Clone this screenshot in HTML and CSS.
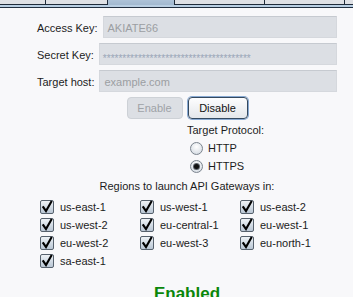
FILE: index.html
```html
<!DOCTYPE html>
<html>
<head>
<meta charset="utf-8">
<link rel="stylesheet" href="styles.css">
</head>
<body>
<div class="tabs">
  <div class="tab t1"></div>
  <div class="tab t2"></div>
  <div class="tab sel"></div>
  <div class="tab t4"></div>
  <div class="tab t5"></div>
  <div class="tab t6"></div>
</div>
<div class="strip"></div>
<div class="content">
  <div class="row">
    <span class="label">Access Key:</span>
    <div class="field">AKIATE66</div>
  </div>
  <div class="row">
    <span class="label">Secret Key:</span>
    <div class="field secret">**************************************</div>
  </div>
  <div class="row">
    <span class="label">Target host:</span>
    <div class="field">example.com</div>
  </div>
  <div class="buttons">
    <div class="btn disabled">Enable</div>
    <div class="btn focused">Disable</div>
  </div>
  <div class="protocol">
    <div class="ptitle">Target Protocol:</div>
    <div class="radio-row"><span class="radio"></span><span>HTTP</span></div>
    <div class="radio-row"><span class="radio on"></span><span>HTTPS</span></div>
  </div>
  <div class="regions-title">Regions to launch API Gateways in:</div>
  <div class="grid">
    <div class="cell"><span class="cb"><svg viewBox="0 0 14 14" width="14" height="14"><path d="M3.3 7.2 L6 11 L11.2 2" fill="none" stroke="#000" stroke-width="2.1" stroke-linecap="square"/></svg></span>us-east-1</div>
    <div class="cell"><span class="cb"><svg viewBox="0 0 14 14" width="14" height="14"><path d="M3.3 7.2 L6 11 L11.2 2" fill="none" stroke="#000" stroke-width="2.1" stroke-linecap="square"/></svg></span>us-west-1</div>
    <div class="cell"><span class="cb"><svg viewBox="0 0 14 14" width="14" height="14"><path d="M3.3 7.2 L6 11 L11.2 2" fill="none" stroke="#000" stroke-width="2.1" stroke-linecap="square"/></svg></span>us-east-2</div>
    <div class="cell"><span class="cb"><svg viewBox="0 0 14 14" width="14" height="14"><path d="M3.3 7.2 L6 11 L11.2 2" fill="none" stroke="#000" stroke-width="2.1" stroke-linecap="square"/></svg></span>us-west-2</div>
    <div class="cell"><span class="cb"><svg viewBox="0 0 14 14" width="14" height="14"><path d="M3.3 7.2 L6 11 L11.2 2" fill="none" stroke="#000" stroke-width="2.1" stroke-linecap="square"/></svg></span>eu-central-1</div>
    <div class="cell"><span class="cb"><svg viewBox="0 0 14 14" width="14" height="14"><path d="M3.3 7.2 L6 11 L11.2 2" fill="none" stroke="#000" stroke-width="2.1" stroke-linecap="square"/></svg></span>eu-west-1</div>
    <div class="cell"><span class="cb"><svg viewBox="0 0 14 14" width="14" height="14"><path d="M3.3 7.2 L6 11 L11.2 2" fill="none" stroke="#000" stroke-width="2.1" stroke-linecap="square"/></svg></span>eu-west-2</div>
    <div class="cell"><span class="cb"><svg viewBox="0 0 14 14" width="14" height="14"><path d="M3.3 7.2 L6 11 L11.2 2" fill="none" stroke="#000" stroke-width="2.1" stroke-linecap="square"/></svg></span>eu-west-3</div>
    <div class="cell"><span class="cb"><svg viewBox="0 0 14 14" width="14" height="14"><path d="M3.3 7.2 L6 11 L11.2 2" fill="none" stroke="#000" stroke-width="2.1" stroke-linecap="square"/></svg></span>eu-north-1</div>
    <div class="cell"><span class="cb"><svg viewBox="0 0 14 14" width="14" height="14"><path d="M3.3 7.2 L6 11 L11.2 2" fill="none" stroke="#000" stroke-width="2.1" stroke-linecap="square"/></svg></span>sa-east-1</div>
  </div>
  <div class="status">Enabled</div>
</div>
</body>
</html>
```

FILE: styles.css
```css
html, body {
  margin: 0;
  padding: 0;
}
body {
  width: 353px;
  height: 297px;
  overflow: hidden;
  background: #f8f8fa;
  font-family: "Liberation Sans", Arial, sans-serif;
  font-size: 11px;
  color: #1c1c1c;
}
.tabs {
  display: flex;
  height: 5px;
}
.tab {
  box-sizing: border-box;
  height: 5px;
  background: #dfe1e5;
  border-right: 1px solid #1f2b3a;
  border-bottom: 1px solid #1f2b3a;
}
.t1 { width: 46px; }
.t2 { width: 62px; }
.sel {
  width: 67px;
  background: linear-gradient(#aec3d8, #a2b9d0);
  border-bottom: none;
}
.t4 { width: 90px; }
.t5 { width: 80px; }
.t6 { flex: 1; border-right: none; }
.strip {
  height: 2px;
  background: #b9cfe3;
  border-bottom: 1px solid #223041;
}
.content {
  padding: 8px 16px 0 37px;
}
.row {
  display: flex;
  align-items: center;
  gap: 5px;
  height: 22px;
  margin-bottom: 5px;
}
.label {
  padding-top: 2px;
  white-space: nowrap;
}
.field {
  flex: 1;
  box-sizing: border-box;
  height: 22px;
  background: #dcdfe4;
  border: 1px solid #d5d8dd;
  border-top-color: #c6cad0;
  color: #9b9ea2;
  padding: 2px 4px 0 4px;
  line-height: 18px;
  white-space: nowrap;
  overflow: hidden;
}
.secret {
  color: #9aa6b8;
  font-size: 10px;
  line-height: 20px;
  padding: 5px 0 0 3px;
}
.buttons {
  display: flex;
  justify-content: center;
  gap: 5px;
}
.btn {
  box-sizing: border-box;
  height: 22px;
  line-height: 20px;
  text-align: center;
  border-radius: 4px;
}
.disabled {
  width: 56px;
  background: #dcdfe4;
  border: 1px solid #cdd1d6;
  color: #9ea2a7;
}
.focused {
  width: 60px;
  background: linear-gradient(#fdfdfe, #e4e7eb);
  border: 1px solid #34495f;
  box-shadow: 0 0 0 1px #88a9d2;
  color: #111;
}
.protocol {
  margin-left: 50%;
  margin-top: 5px;
}
.ptitle {
  line-height: 13px;
  margin-bottom: 2px;
}
.radio-row {
  display: flex;
  align-items: center;
  height: 18px;
  gap: 5px;
  padding-left: 3px;
}
.radio {
  box-sizing: border-box;
  width: 13px;
  height: 13px;
  border-radius: 50%;
  border: 1px solid #7b848e;
  background: radial-gradient(circle at 50% 35%, #ffffff, #dde2e8 70%, #c7ced6);
  display: flex;
  align-items: center;
  justify-content: center;
}
.radio.on::after {
  content: "";
  width: 5px;
  height: 5px;
  border-radius: 50%;
  background: #111;
  box-shadow: 0 0 0 1px #5a6068;
}
.regions-title {
  margin-top: 5px;
  text-align: center;
  line-height: 13px;
  margin-bottom: 5px;
}
.grid {
  display: grid;
  grid-template-columns: repeat(3, 100px);
  grid-auto-rows: 18px;
}
.cell {
  display: flex;
  align-items: center;
  gap: 6px;
  padding-left: 3px;
  white-space: nowrap;
}
.cb {
  box-sizing: border-box;
  width: 14px;
  height: 14px;
  border: 1px solid #56616d;
  border-radius: 2px;
  background: linear-gradient(#eef2f6, #b9c6d4);
  display: flex;
  align-items: center;
  justify-content: center;
  overflow: visible;
}
.cb svg {
  display: block;
  flex: none;
}
.status {
  margin-top: 14px;
  text-align: center;
  font-size: 17px;
  font-weight: bold;
  color: #0a870a;
}
```
